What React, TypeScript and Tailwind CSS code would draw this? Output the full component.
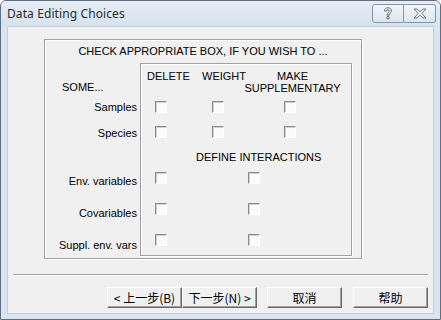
const ui = "font-['Liberation_Sans','Noto_Sans_CJK_SC',sans-serif]"

function Check() {
  return (
    <div className="w-[12px] h-[12px] shrink-0 border border-t-[#8a8a8a] border-l-[#8a8a8a] border-r-white border-b-white bg-[#fbfbfb] shadow-[inset_1px_1px_0_#d0d0d0]" />
  )
}

function Btn({ label, className = '' }: { label: string; className?: string }) {
  return (
    <button
      className={`w-[75px] h-[21px] shrink-0 flex items-center justify-center bg-[#f0f0f0] border border-t-white border-l-white border-r-[#696969] border-b-[#696969] shadow-[inset_-1px_-1px_0_#a0a0a0] text-[12px] leading-none text-black font-['Noto_Sans_CJK_SC',sans-serif] ${className}`}
    >
      {label}
    </button>
  )
}

export default function App() {
  const rows = ['Samples', 'Species']
  const interRows = ['Env. variables', 'Covariables', 'Suppl. env. vars']

  return (
    <div className={`w-[441px] h-[320px] flex flex-col bg-[#dbe5ef] border border-[#5f6e80] rounded-t-[6px] overflow-hidden ${ui}`}>
      {/* Title bar */}
      <div className="h-[25px] shrink-0 flex items-center justify-between pl-[6px] pr-[4px] bg-gradient-to-b from-[#e6edf5] to-[#d7e2ee]">
        <span className="text-[12px] text-[#2a2a2a] font-['Noto_Sans',sans-serif] tracking-[0.1px]">Data Editing Choices</span>
        <div className="flex self-start mt-[3px]">
          <div className="w-[32px] h-[19px] flex items-center justify-center border border-[#8595a8] rounded-l-[3px] bg-gradient-to-b from-[#f3f6fa] to-[#dce5ef]">
            <svg width="10" height="13" viewBox="0 0 10 13">
              <path
                d="M1.5 4 C1.5 1.5 3.2 0.8 5 0.8 C7 0.8 8.6 1.8 8.6 3.8 C8.6 5.6 6 6.2 6 8.2 L4 8.2 C4 5.6 6.4 5.2 6.4 3.9 C6.4 3.1 5.8 2.7 5 2.7 C4.1 2.7 3.6 3.2 3.6 4 Z M4 9.6 L6 9.6 L6 11.8 L4 11.8 Z"
                fill="#f4f7fa"
                stroke="#566678"
                strokeWidth="0.9"
              />
            </svg>
          </div>
          <div className="w-[32px] h-[19px] flex items-center justify-center border border-l-0 border-[#8595a8] rounded-r-[3px] bg-gradient-to-b from-[#f3f6fa] to-[#dce5ef]">
            <svg width="14" height="11" viewBox="0 0 14 11">
              <path
                d="M1 1 L4 1 L7 3.8 L10 1 L13 1 L8.8 5.5 L13 10 L10 10 L7 7.2 L4 10 L1 10 L5.2 5.5 Z"
                fill="#f4f7fa"
                stroke="#566678"
                strokeWidth="0.9"
                strokeLinejoin="round"
              />
            </svg>
          </div>
        </div>
      </div>

      {/* Client */}
      <div className="flex-1 mx-[6px] mb-[5px] bg-[#f0f0f0] border border-[#c4ceda] flex flex-col text-[11px] text-black">
        {/* Outer group */}
        <div className="ml-[36px] mt-[12px] w-[318px] h-[220px] border border-[#a0a0a0] shadow-[1px_1px_0_#fff,inset_1px_1px_0_#fff] flex flex-col">
          <div className="h-[23px] shrink-0 flex items-center justify-center leading-none">
            CHECK APPROPRIATE BOX, IF YOU WISH TO ...
          </div>
          <div className="flex">
            {/* Labels column */}
            <div className="w-[95px] shrink-0 flex flex-col items-end pr-[3px] leading-[12px]">
              <div className="h-[31px] w-full pt-[18px] pl-[17px]">SOME...</div>
              {rows.map((l) => (
                <div key={l} className="h-[26px] flex items-center">{l}</div>
              ))}
              <div className="h-[19px]" />
              {interRows.map((l) => (
                <div key={l} className="h-[32px] flex items-center whitespace-nowrap">{l}</div>
              ))}
            </div>

            {/* Inner group */}
            <div className="w-[212px] h-[193px] border border-[#a0a0a0] shadow-[1px_1px_0_#fff,inset_1px_1px_0_#fff] flex flex-col leading-[12px]">
              <div className="h-[31px] flex pt-[6px]">
                <span className="ml-[6px] w-[55px]">DELETE</span>
                <span className="w-[42px]">WEIGHT</span>
                <span className="w-[97px] text-center">
                  MAKE
                  <br />
                  SUPPLEMENTARY
                </span>
              </div>
              {rows.map((l) => (
                <div key={l} className="h-[26px] flex items-center pl-[14px]">
                  <Check />
                  <div className="ml-[45px]"><Check /></div>
                  <div className="ml-[60px]"><Check /></div>
                </div>
              ))}
              <div className="h-[19px] flex items-end pl-[55px]">DEFINE INTERACTIONS</div>
              {interRows.map((l) => (
                <div key={l} className="h-[32px] flex items-center pl-[14px]">
                  <Check />
                  <div className="ml-[81px]"><Check /></div>
                </div>
              ))}
            </div>
          </div>
        </div>

        {/* Separator */}
        <div className="mx-[5px] mt-[15px] h-[2px] border-t border-[#a0a0a0] border-b border-b-white" />

        {/* Buttons */}
        <div className="flex mt-[11px] pl-[99px]">
          <Btn label="< 上一步(B)" />
          <Btn label="下一步(N) >" />
          <Btn label="取消" className="ml-[10px]" />
          <Btn label="帮助" className="ml-[11px]" />
        </div>
      </div>
    </div>
  )
}
